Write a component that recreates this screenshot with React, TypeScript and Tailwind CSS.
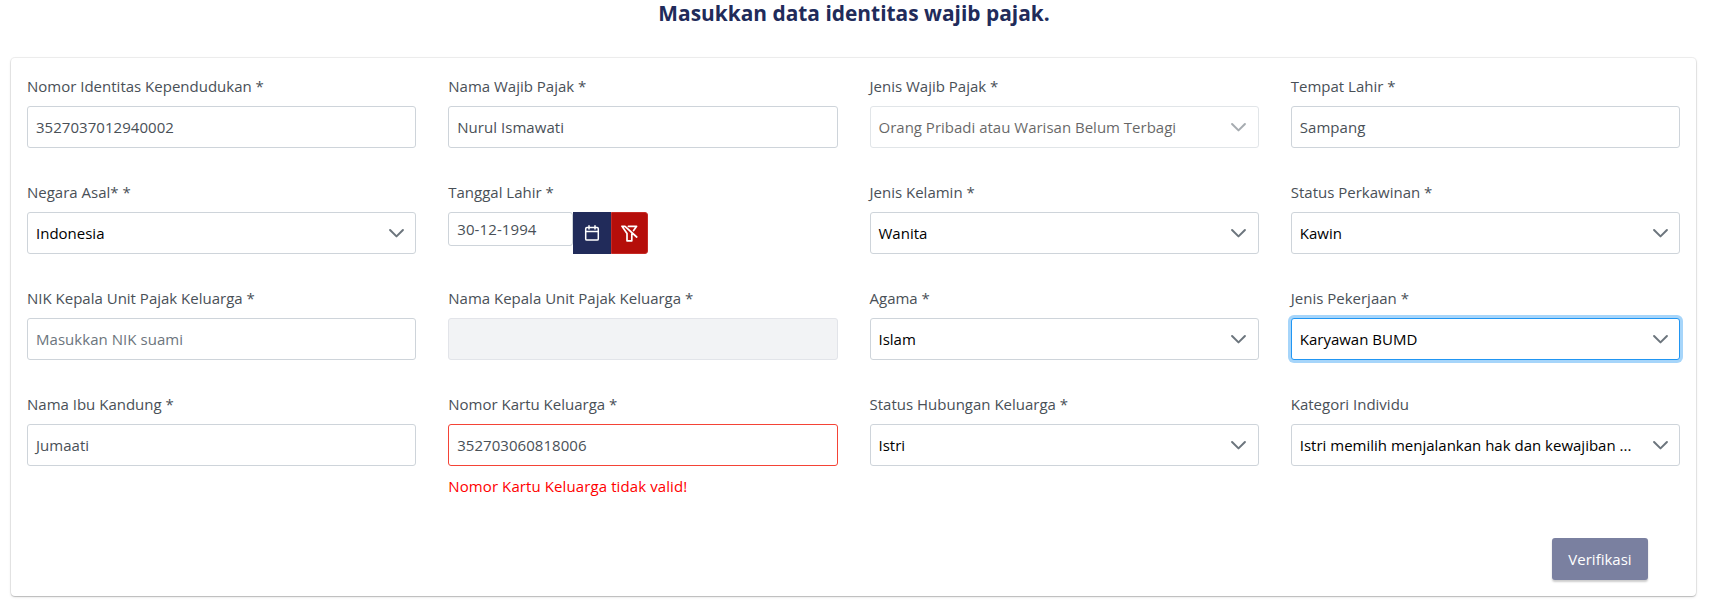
import React from "react";

type FieldProps = { label: string; children: React.ReactNode; error?: string };

function Field({ label, children, error }: FieldProps) {
  return (
    <div className="flex h-[106px] min-w-0 flex-col">
      <label className="h-8 whitespace-nowrap leading-6">{label}</label>
      {children}
      {error && <p className="mt-2 whitespace-nowrap leading-6 tracking-[0.1px] text-[#ff0000]">{error}</p>}
    </div>
  );
}

function TextInput({ value, className = "border-[#ced4da] bg-white" }: { value: string; className?: string }) {
  return (
    <div className={`flex h-[42px] shrink-0 items-center rounded-[3px] border px-2 tracking-[0.04px] ${className}`}>{value}</div>
  );
}

function Chevron() {
  return (
    <svg width="17" height="17" viewBox="0 0 14 14" fill="none" stroke="#6c757d" strokeWidth="1.65" strokeLinecap="round" strokeLinejoin="round">
      <path d="M1.7 4.1L7 9.4L12.3 4.1" />
    </svg>
  );
}

function Select({ value, className = "border-[#ced4da]" }: { value: string; className?: string }) {
  return (
    <div className={`flex h-[42px] shrink-0 items-center rounded-[3px] border bg-white pl-2 text-black ${className}`}>
      <span className="min-w-0 flex-1 whitespace-nowrap">{value}</span>
      <span className="flex w-[38px] shrink-0 items-center justify-center">
        <Chevron />
      </span>
    </div>
  );
}

function DateInput() {
  return (
    <div className="flex items-start">
      <div className="flex h-[34px] w-[125px] items-center rounded-[3px] border border-[#ced4da] px-2 tracking-[0.1px]">30-12-1994</div>
      <button className="flex h-[42px] w-[38px] items-center justify-center bg-[#212b5a] text-white">
        <svg width="16" height="16" viewBox="0 0 16 16" fill="none" stroke="currentColor" strokeWidth="1.5" strokeLinecap="round" strokeLinejoin="round">
          <rect x="1.7" y="2.5" width="12.6" height="12.6" rx="1.2" />
          <path d="M1.7 6.5H14.3M5 0.8V4M11 0.8V4" />
        </svg>
      </button>
      <button className="flex h-[42px] w-[37px] items-center justify-center rounded-r-[3px] border border-[#c52a25] bg-[#b50e0a] text-white">
        <svg width="17" height="17" viewBox="0 0 17 17" fill="none" stroke="currentColor" strokeWidth="1.7" strokeLinecap="round" strokeLinejoin="round">
          <path d="M4 1.3L15.7 12M7.4 1.3H15.6L12.6 5.6M1 1.3H4M1 1.3L6 8.4V15.8H10.8V9" />
        </svg>
      </button>
    </div>
  );
}

export default function App() {
  return (
    <main className="h-[603px] overflow-hidden bg-white font-['Open_Sans',sans-serif] text-[15px] text-[#495057]">
      <h1 className="h-[58px] pr-px text-center text-[20.9px] font-bold leading-[26px] text-[#212b5a]">
        Masukkan data identitas wajib pajak.
      </h1>
      <section className="ml-[11px] mr-[13px] h-[538px] rounded-[4px] bg-white px-4 pt-4 shadow-[0_0_0_1px_rgba(0,0,0,0.06),0_1px_1px_0_rgba(0,0,0,0.14),0_1px_3px_0_rgba(0,0,0,0.12)]">
        <div className="grid grid-cols-4 gap-x-8">
          <Field label="Nomor Identitas Kependudukan *"><TextInput value="3527037012940002" /></Field>
          <Field label="Nama Wajib Pajak *"><TextInput value="Nurul Ismawati" /></Field>
          <Field label="Jenis Wajib Pajak *"><Select value="Orang Pribadi atau Warisan Belum Terbagi" className="border-[#ced4da] opacity-60" /></Field>
          <Field label="Tempat Lahir *"><TextInput value="Sampang" /></Field>

          <Field label="Negara Asal* *"><Select value="Indonesia" /></Field>
          <Field label="Tanggal Lahir *"><DateInput /></Field>
          <Field label="Jenis Kelamin *"><Select value="Wanita" /></Field>
          <Field label="Status Perkawinan *"><Select value="Kawin" /></Field>

          <Field label="NIK Kepala Unit Pajak Keluarga *"><TextInput value="Masukkan NIK suami" className="border-[#ced4da] bg-white text-[#6c757d]" /></Field>
          <Field label="Nama Kepala Unit Pajak Keluarga *"><TextInput value="" className="border-[#e2e4e9] bg-[#f2f3f5]" /></Field>
          <Field label="Agama *"><Select value="Islam" /></Field>
          <Field label="Jenis Pekerjaan *"><Select value="Karyawan BUMD" className="border-[#2196f3] shadow-[0_0_0_3px_#a6d5fa]" /></Field>

          <Field label="Nama Ibu Kandung *"><TextInput value="Jumaati" /></Field>
          <Field label="Nomor Kartu Keluarga *" error="Nomor Kartu Keluarga tidak valid!"><TextInput value="352703060818006" className="border-[#f44336] bg-white" /></Field>
          <Field label="Status Hubungan Keluarga *"><Select value="Istri" /></Field>
          <Field label="Kategori Individu"><Select value="Istri memilih menjalankan hak dan kewajiban ..." /></Field>
        </div>
        <div className="mt-10 flex justify-end pr-8">
          <button className="h-[42px] w-24 rounded-[3px] bg-[#7a80a0] font-medium text-white shadow-[0_2px_2px_rgba(0,0,0,0.2)]">Verifikasi</button>
        </div>
      </section>
    </main>
  );
}
